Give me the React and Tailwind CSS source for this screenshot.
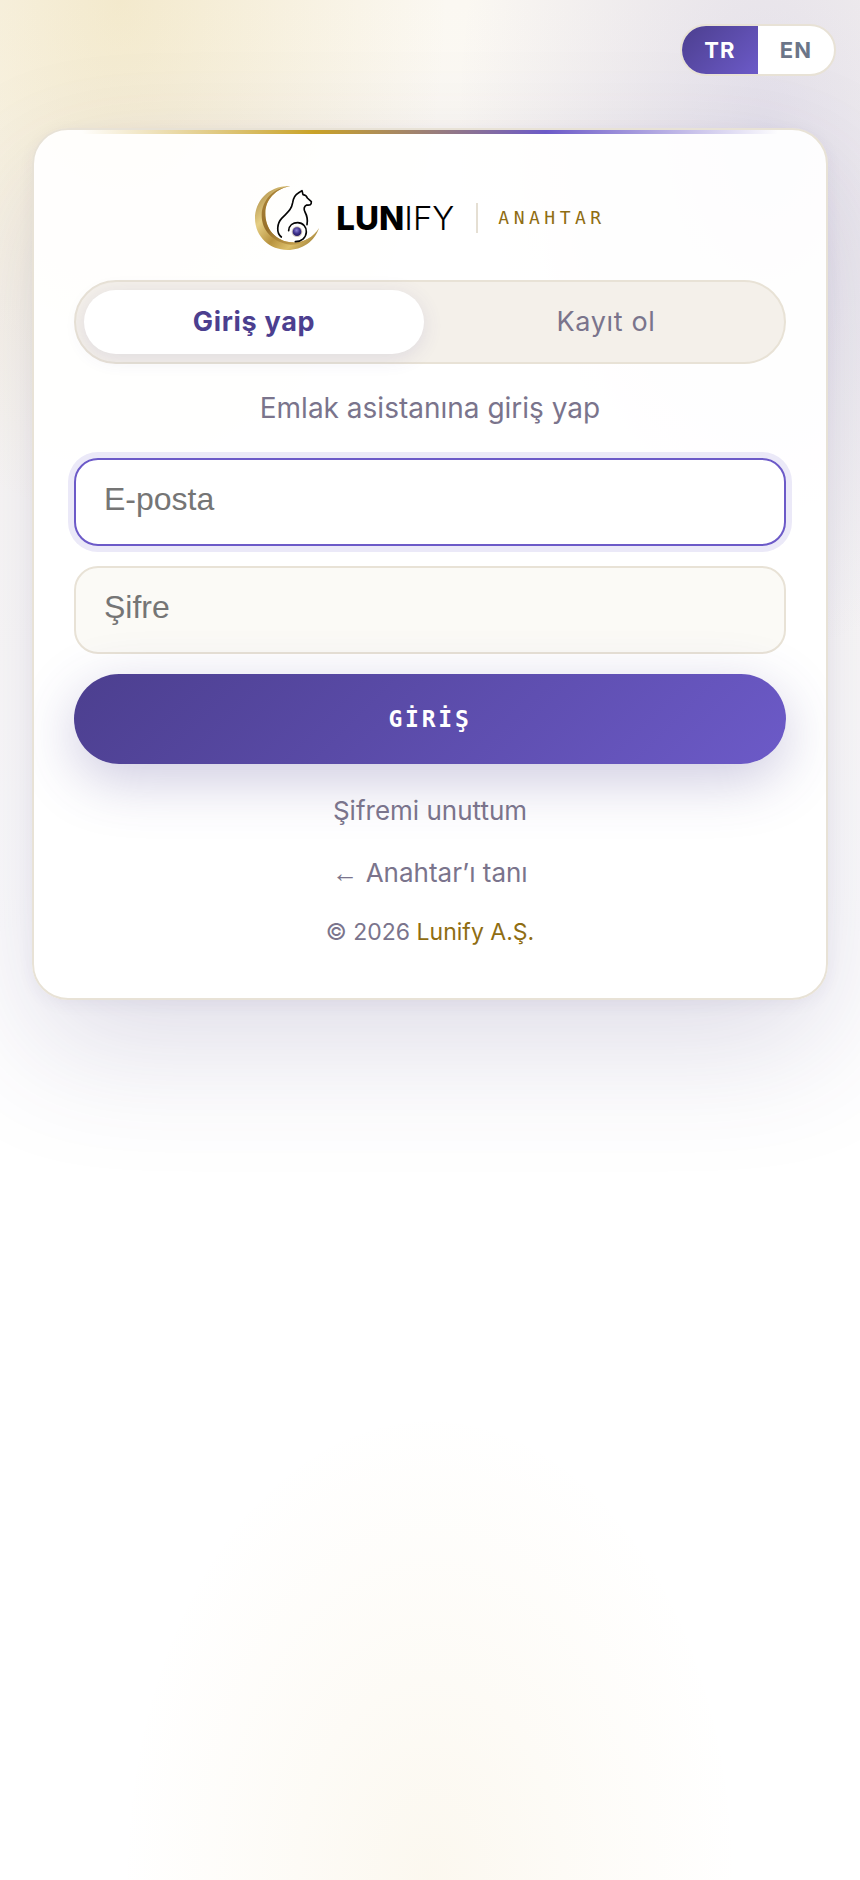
import { useState } from 'react'
import clsx from 'clsx'

const languages = ['TR', 'EN']

const tabs = [
  { id: 'login', label: 'Giriş yap' },
  { id: 'register', label: 'Kayıt ol' },
]

const fields = [
  { id: 'email', type: 'email', label: 'E-posta', active: true },
  { id: 'password', type: 'password', label: 'Şifre', active: false },
]

function LogoMark() {
  return (
    <svg viewBox="39 45 198 198" className="h-[66px] w-[66px]" fill="none" aria-hidden="true">
      <defs>
        <linearGradient id="gold" x1="42" y1="60" x2="230" y2="230" gradientUnits="userSpaceOnUse">
          <stop offset="0" stopColor="#a58440" />
          <stop offset="0.3" stopColor="#e6cf84" />
          <stop offset="0.55" stopColor="#b8933f" />
          <stop offset="0.75" stopColor="#dcbf6a" />
          <stop offset="1" stopColor="#94722c" />
        </linearGradient>
        <linearGradient id="goldEdge" x1="90" y1="60" x2="190" y2="225" gradientUnits="userSpaceOnUse">
          <stop offset="0" stopColor="#a98238" />
          <stop offset="0.5" stopColor="#966f2a" />
          <stop offset="1" stopColor="#c9a550" />
        </linearGradient>
        <radialGradient id="orb" cx="0.45" cy="0.35" r="0.6">
          <stop offset="0" stopColor="#8d83d6" />
          <stop offset="0.6" stopColor="#41348f" />
          <stop offset="1" stopColor="#2b2168" />
        </radialGradient>
      </defs>
      <path d="M148 48C82 46 42 94 42 145c0 57 46 95 97 95 46 0 82-26 95-66-17 29-47 45-81 43-49-3-81-41-80-89 1-38 28-70 75-80Z" fill="url(#gold)" />
      <path d="M148 48c-52 6-84 42-86 86-1 48 36 84 87 90 34 1 66-18 85-50-17 29-47 45-81 43-49-3-81-41-80-89 1-38 28-70 75-80Z" fill="url(#goldEdge)" />
      <g stroke="#050505" strokeWidth="5" strokeLinecap="round" strokeLinejoin="round">
        <path d="M121 201c-16-13-13-41 1-56 17-18 29-24 33-47 2-14 8-24 17-29l11-7 3 12c8 1 11 4 13 10l12 11c1 10-5 11-14 10-9 4-9 13-5 21 6 11 9 23 6 38" />
        <path d="M143 182c1-16 13-24 27-24 16 0 27 13 26 28-1 18-15 29-33 29" />
      </g>
      <circle cx="168" cy="185" r="16" fill="#cfc4bd" />
      <circle cx="168" cy="185" r="13" fill="url(#orb)" />
    </svg>
  )
}

function LanguageSwitch() {
  const [language, setLanguage] = useState('TR')

  return (
    <div className="flex h-[52px] overflow-hidden rounded-full border-2 border-[#e8e2d6] bg-white">
      {languages.map((code) => (
        <button
          key={code}
          type="button"
          onClick={() => setLanguage(code)}
          className={clsx(
            'w-[76px] text-[22px] font-bold tracking-wider',
            code === language ? 'bg-linear-135 from-[#4c3f8f] to-[#6c5ac8] text-white' : 'text-[#6b7588]',
          )}
        >
          {code}
        </button>
      ))}
    </div>
  )
}

export default function App() {
  const [tab, setTab] = useState('login')

  return (
    <div className="min-h-screen bg-white bg-[radial-gradient(ellipse_38%_28%_at_14%_0%,rgba(212,175,55,0.2),transparent),radial-gradient(ellipse_36%_28%_at_89%_7%,rgba(90,80,180,0.15),transparent),radial-gradient(ellipse_36%_25%_at_50%_100%,rgba(212,165,55,0.08),transparent),linear-gradient(180deg,#fbf8f2,#ffffff_50%)] font-['Inter',sans-serif] text-[#7a748c]">
      <header className="flex justify-end px-6 pt-6">
        <LanguageSwitch />
      </header>

      <main className="px-8 pt-[52px] pb-20">
        <div className="overflow-hidden rounded-[36px] border-2 border-[#e8e2d6] bg-white/92 shadow-[0_48px_128px_rgba(66,56,120,0.17),0_4px_16px_rgba(66,56,120,0.06)]">
          <div className="mx-12 h-1 bg-[linear-gradient(90deg,transparent,#c9a227,#6c5ac8,transparent)]" />

          <div className="px-10 pt-12 pb-[46px]">
            <div className="flex h-[72px] items-center justify-center">
              <LogoMark />
              <span className="ml-4 text-[33px] leading-none text-black">
                <b className="font-extrabold">LUN</b>
                <span className="font-light">IFY</span>
              </span>
              <span className="ml-[22px] h-[30px] w-0.5 bg-[#e5dfd3]" />
              <span className="ml-5 font-['DejaVu_Sans_Mono',monospace] text-lg tracking-[0.25em] text-[#8f6d12]">ANAHTAR</span>
            </div>

            <div className="mt-[26px] grid grid-cols-2 gap-3 rounded-full border-2 border-[#e8e2d6] bg-[#f4f0ea] p-2">
              {tabs.map((item) => (
                <button
                  key={item.id}
                  type="button"
                  onClick={() => setTab(item.id)}
                  className={clsx(
                    'h-16 rounded-full text-[27px] tracking-wide',
                    item.id === tab ? 'bg-white font-bold text-[#4c3f8f] shadow-[0_4px_20px_rgba(76,63,145,0.12)]' : 'font-normal',
                  )}
                >
                  {item.label}
                </button>
              ))}
            </div>

            <p className="mt-6 text-center text-[28px] leading-10">Emlak asistanına giriş yap</p>

            <form className="mt-[30px] flex flex-col gap-5" onSubmit={(e) => e.preventDefault()}>
              {fields.map((field) => (
                <input
                  key={field.id}
                  id={field.id}
                  type={field.type}
                  aria-label={field.label}
                  placeholder={field.label}
                  className={clsx(
                    "h-[88px] w-full rounded-3xl border-2 px-7 pt-4 pb-[22px] font-['Liberation_Sans',sans-serif] text-[32px] text-[#1f1b2e] outline-none placeholder:text-[#757575]",
                    field.active
                      ? 'border-[#6c5ac8] bg-white ring-6 ring-[#ebe9f8]'
                      : 'border-[#e8e2d6] bg-[#fbfaf6]',
                  )}
                />
              ))}
              <button
                type="submit"
                className="h-[90px] rounded-full bg-linear-135 from-[#4c3f8f] to-[#6c5ac8] font-['DejaVu_Sans_Mono',monospace] text-[23px] font-bold tracking-[0.12em] text-white shadow-[0_16px_56px_rgba(76,63,145,0.28)]"
              >
                GİRİŞ
              </button>
            </form>

            <div className="mt-[27px] text-center text-[26px] leading-10">
              <a href="#forgot" className="block">Şifremi unuttum</a>
              <a href="#about" className="mt-[22px] block">
                <span className="font-['Liberation_Sans',sans-serif]">←</span> Anahtar’ı tanı
              </a>
            </div>
            <p className="mt-[19px] text-center text-[23px] leading-10">
              © 2026 <a href="#lunify" className="text-[#8f6d12]">Lunify A.Ş.</a>
            </p>
          </div>
        </div>
      </main>
    </div>
  )
}
